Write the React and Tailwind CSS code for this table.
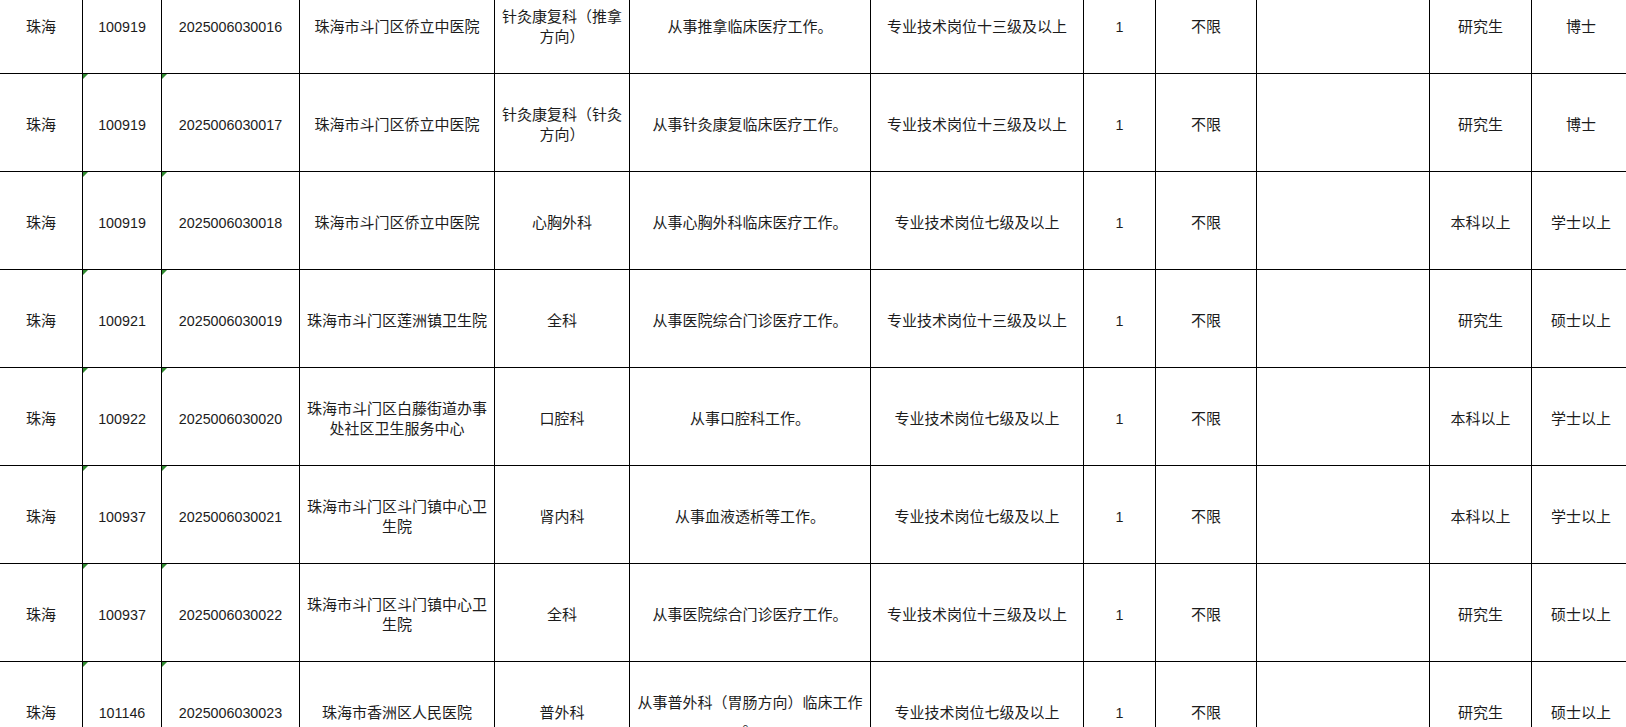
import React from "react";

const rows = [
  ["珠海", "100919", "2025006030016", ["珠海市斗门区侨立中医院"], ["针灸康复科（推拿", "方向）"], ["从事推拿临床医疗工作。"], "专业技术岗位十三级及以上", "1", "不限", "", "研究生", "博士"],
  ["珠海", "100919", "2025006030017", ["珠海市斗门区侨立中医院"], ["针灸康复科（针灸", "方向）"], ["从事针灸康复临床医疗工作。"], "专业技术岗位十三级及以上", "1", "不限", "", "研究生", "博士"],
  ["珠海", "100919", "2025006030018", ["珠海市斗门区侨立中医院"], ["心胸外科"], ["从事心胸外科临床医疗工作。"], "专业技术岗位七级及以上", "1", "不限", "", "本科以上", "学士以上"],
  ["珠海", "100921", "2025006030019", ["珠海市斗门区莲洲镇卫生院"], ["全科"], ["从事医院综合门诊医疗工作。"], "专业技术岗位十三级及以上", "1", "不限", "", "研究生", "硕士以上"],
  ["珠海", "100922", "2025006030020", ["珠海市斗门区白藤街道办事", "处社区卫生服务中心"], ["口腔科"], ["从事口腔科工作。"], "专业技术岗位七级及以上", "1", "不限", "", "本科以上", "学士以上"],
  ["珠海", "100937", "2025006030021", ["珠海市斗门区斗门镇中心卫", "生院"], ["肾内科"], ["从事血液透析等工作。"], "专业技术岗位七级及以上", "1", "不限", "", "本科以上", "学士以上"],
  ["珠海", "100937", "2025006030022", ["珠海市斗门区斗门镇中心卫", "生院"], ["全科"], ["从事医院综合门诊医疗工作。"], "专业技术岗位十三级及以上", "1", "不限", "", "研究生", "硕士以上"],
  ["珠海", "101146", "2025006030023", ["珠海市香洲区人民医院"], ["普外科"], ["从事普外科（胃肠方向）临床工作", "。"], "专业技术岗位七级及以上", "1", "不限", "", "研究生", "硕士以上"],
];

function Tri() {
  return (
    <span className="absolute top-0 left-0 w-0 h-0 border-t-[5px] border-t-[#2f8a2f] border-r-[5px] border-r-transparent" />
  );
}

function Cell({ children, tri, num, last }) {
  return (
    <div
      className={
        "relative flex flex-col items-center justify-center text-center border-b border-black px-[2px] pt-[4px] leading-[20px] " +
        (last ? "" : "border-r ") +
        (num ? "text-[14.3px]" : "text-[15px]")
      }
    >
      {tri && <Tri />}
      {children}
    </div>
  );
}

function Lines({ lines }) {
  return lines.map((l, i) => <span key={i} className="block whitespace-nowrap">{l}</span>);
}

export default function App() {
  return (
    <div
      className="w-[1626px] h-[727px] overflow-hidden bg-white text-[#1c1c1c]"
      style={{ fontFamily: '"Liberation Sans", "Noto Sans CJK SC", sans-serif' }}
    >
      <div className="-mt-[24px] w-[1630px]">
        {rows.map((r, i) => (
          <div
            key={i}
            className="grid h-[98px] grid-cols-[83px_79px_138px_195px_135px_241px_213px_72px_101px_173px_102px_98px]"
          >
            <Cell>{r[0]}</Cell>
            <Cell tri num>{r[1]}</Cell>
            <Cell tri num>{r[2]}</Cell>
            <Cell><Lines lines={r[3]} /></Cell>
            <Cell><Lines lines={r[4]} /></Cell>
            <Cell><Lines lines={r[5]} /></Cell>
            <Cell>{r[6]}</Cell>
            <Cell num>{r[7]}</Cell>
            <Cell>{r[8]}</Cell>
            <Cell>{r[9]}</Cell>
            <Cell>{r[10]}</Cell>
            <Cell last>{r[11]}</Cell>
          </div>
        ))}
      </div>
    </div>
  );
}
